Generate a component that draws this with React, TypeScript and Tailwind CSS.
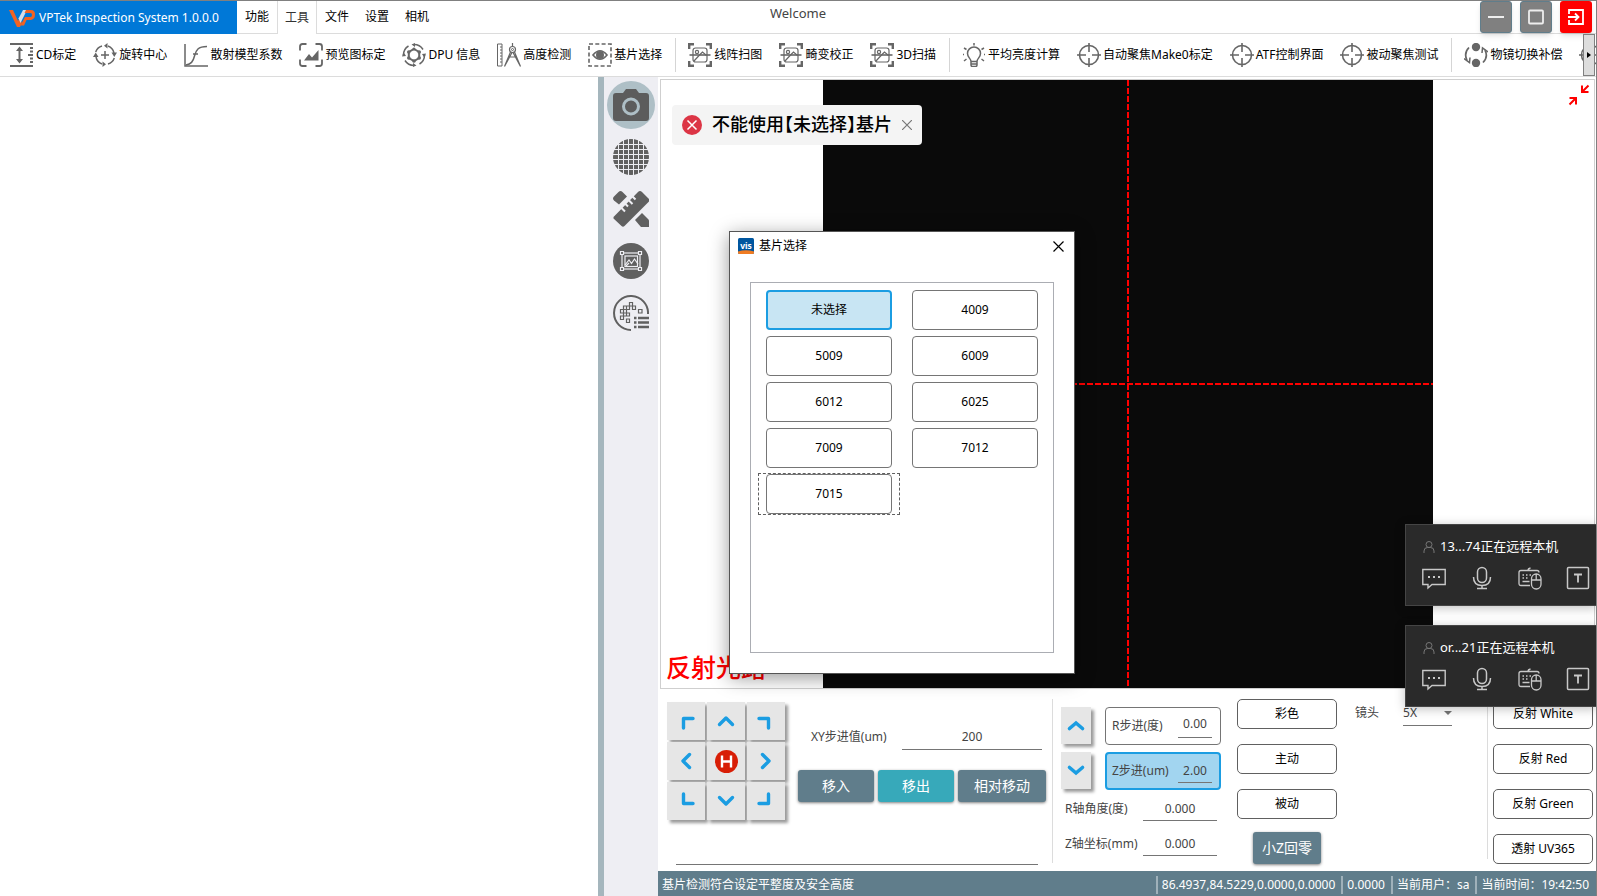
import { useState, type ReactNode } from 'react';
import clsx from 'clsx';

type IconProps = { children: ReactNode; className?: string };

function Icon({ children, className }: IconProps) {
    return (
        <svg
            viewBox="0 0 24 24"
            className={clsx('size-6 shrink-0', className)}
            fill="none"
            stroke="#666666"
            strokeWidth="1.5"
            aria-hidden="true"
        >
            {children}
        </svg>
    );
}

const CalibrateIcon = () => (
    <Icon>
        <path d="M0 1h23M0 23h23" strokeWidth="2" />
        <path d="M9.500 5v14" strokeWidth="2" />
        <path d="M6 8l3.500-4.500L13 8zM6 16l3.500 4.500L13 16z" fill="#666666" stroke="none" />
        <path d="M20 5h3M20 8.500h3M18 12h5M20 15.500h3M20 19h3" strokeWidth="2" />
    </Icon>
);

const RotateIcon = () => (
    <Icon>
        <path d="M15 3a9.500 9.500 0 0 1 6 7M21.300 15A9.500 9.500 0 0 1 15 21M9 21a9.500 9.500 0 0 1-6-7M2.700 9A9.500 9.500 0 0 1 9 3" />
        <path d="M12 8v8M8 12h8" strokeWidth="1.500" />
        <path d="M14.500 0v5.500L11 2.700zM24 9.500l-2.700 4.500-2.800-4.500zM9.500 24v-5.500l3.500 2.800zM0 14l2.700-4.500L5.500 14z" fill="#666666" stroke="none" />
    </Icon>
);

const CurveIcon = () => (
    <Icon>
        <path d="M1 1v22h23" />
        <path d="M2 22c5-1 7-3 8.500-9S14 3.500 23 3.500M9 11h5" />
    </Icon>
);

const PreviewIcon = () => (
    <Icon>
        <path d="M7.500 1H3.500Q1 1 1 3.500V7.500M16.500 1h4Q23 1 23 3.500V7.500M7.500 23H3.500Q1 23 1 20.500V16.500M16.500 23h4q2.500 0 2.500-2.500V16.500" strokeWidth="1.800" />
        <path d="M5 17.500l5-6.500 3 3.500 6.500-7.500v10.500z" fill="#666666" stroke="none" />
    </Icon>
);

const DpuIcon = () => (
    <Icon>
        <path d="M12 1.500a10.500 10.500 0 0 1 9 5M22.500 12a10.500 10.500 0 0 1-5 9M12 22.500a10.500 10.500 0 0 1-9-5M1.500 12a10.500 10.500 0 0 1 5-9" />
        <path d="M12 6l5.200 3v6L12 18l-5.200-3V9z" strokeWidth="2" />
        <g fill="#666666" stroke="none">
            <circle cx="6.800" cy="9" r="1.800" />
            <circle cx="17.200" cy="9" r="1.800" />
            <circle cx="6.800" cy="15" r="1.800" />
            <circle cx="17.200" cy="15" r="1.800" />
            <circle cx="12" cy="6" r="1.500" />
            <circle cx="12" cy="18" r="1.800" />
            <path d="M13 0v4L9.500 1.500zM24 10.500l-1.500 4.500-2.500-4zM11 24v-4l3.500 2.500zM0 13.500L1.500 9 4 13z" />
        </g>
    </Icon>
);

const CompassIcon = () => (
    <Icon className="overflow-visible">
        <path d="M.5 1h4.500v22H.5zM3 4h2M3 7h2M3 10h2M3 13h2M3 16h2M3 19h2" strokeWidth="1" />
        <path d="M15.500 0v3.500M13.500 9L7.500 23.500 15 9.500M17.500 9l6 14.500L16 9.500M11.500 14h8" strokeWidth="1.200" />
        <circle cx="15.500" cy="6.500" r="3" strokeWidth="1.200" />
        <circle cx="15.500" cy="6.500" r="1" strokeWidth="1" />
    </Icon>
);

const SubstrateIcon = () => (
    <Icon>
        <rect x="1" y="1" width="22" height="22" strokeWidth="1.600" strokeDasharray="4 2.300" />
        <path d="M5 12q7-8.500 14 0q-7 8.500-14 0z" strokeWidth="1.700" />
        <circle cx="12" cy="12" r="4" fill="#666666" stroke="none" />
    </Icon>
);

const ScanIcon = () => (
    <Icon>
        <path d="M6 1.200H1.200V6M18 1.200h4.800V6M6 22.800H1.200V18M18 22.800h4.800V18" strokeWidth="2.400" />
        <path d="M1.500 12h21" strokeWidth="1.600" />
        <rect x="5" y="5" width="14" height="14" rx="2.500" strokeWidth="1.200" />
        <circle cx="9" cy="9" r="1.600" strokeWidth="1.200" />
        <path d="M6 18l6-6.500 2.500-2.500 4 3.500" strokeWidth="1.200" />
    </Icon>
);

const BulbIcon = () => (
    <Icon>
        <path d="M9 18.500c0-3-3.500-4-3.500-8a6.500 6.500 0 0 1 13 0c0 4-3.500 5-3.500 8zM9 18.500V22q0 1.500 1.500 1.500h3q1.500 0 1.500-1.500v-3.500M9 21h6" />
        <path d="M12 0v2.500M2 5l2.500 1.500M22 5l-2.500 1.500M2 18l2.500-2M22 18l-2.500-2M1 11.500h1M22 11.500h1" />
    </Icon>
);

const TargetIcon = () => (
    <Icon>
        <circle cx="12" cy="12" r="9.500" strokeWidth="1.600" />
        <path d="M12 0v9M12 15v9M0 12h9M15 12h9" strokeWidth="1.600" />
    </Icon>
);

const SwitchIcon = () => (
    <Icon>
        <circle cx="12" cy="4" r="4.200" fill="#666666" stroke="none" />
        <circle cx="12" cy="20" r="4.200" fill="#666666" stroke="none" />
        <path d="M5 4.500Q-.5 10 3 17.500M19 19.500Q24.500 14 21 7" strokeWidth="1.700" />
        <path d="M0 15.500l5.500 4 .5-5M24 9l-5.500-4-.5 5" strokeWidth="1.500" />
    </Icon>
);

const toolGroups = [
    [
        { label: 'CD标定', icon: <CalibrateIcon /> },
        { label: '旋转中心', icon: <RotateIcon /> },
        { label: '散射模型系数', icon: <CurveIcon /> },
        { label: '预览图标定', icon: <PreviewIcon /> },
        { label: 'DPU 信息', icon: <DpuIcon /> },
        { label: '高度检测', icon: <CompassIcon /> },
        { label: '基片选择', icon: <SubstrateIcon /> }
    ],
    [
        { label: '线阵扫图', icon: <ScanIcon /> },
        { label: '畸变校正', icon: <ScanIcon /> },
        { label: '3D扫描', icon: <ScanIcon /> }
    ],
    [
        { label: '平均亮度计算', icon: <BulbIcon /> },
        { label: '自动聚焦Make0标定', icon: <TargetIcon /> },
        { label: 'ATF控制界面', icon: <TargetIcon /> },
        { label: '被动聚焦测试', icon: <TargetIcon /> }
    ],
    [
        { label: '物镜切换补偿', icon: <SwitchIcon /> },
        { label: '', icon: <TargetIcon /> }
    ]
];

const menus = ['功能', '工具', '文件', '设置', '相机'];
const substrates = ['未选择', '4009', '5009', '6009', '6012', '6025', '7009', '7012', '7015'];

function Header() {
    return (
        <header className="relative flex h-[34px] shrink-0 border-t border-[#808080]">
            <div className="flex w-[237px] items-center gap-1 bg-[#0078d7] pl-[9px] text-xs text-white">
                <svg viewBox="0 0 26 18" className="h-[18px] w-[26px] shrink-0" aria-hidden="true">
                    <path d="M0 1h4l5 11 1.500-3 2.500 5-2 4H8z" fill="#f26322" />
                    <path d="M9.500 9.500L14 1h4l-6.500 13z" fill="#d5dde8" />
                    <path d="M17 1h5q4 0 4 4.500T22 11h-4.500L15 16.500h-3.500L16 8h5.500q1.500 0 1.500-2t-1.500-2h-6z" fill="#f26322" />
                </svg>
                <span className="whitespace-nowrap">VPTek Inspection System 1.0.0.0</span>
            </div>
            <nav className="flex flex-1 border-b border-[#dcdcdc]">
                {menus.map((menu) => (
                    <button
                        key={menu}
                        className={clsx(
                            'w-10 text-xs',
                            menu === '工具' && '-mb-px border-x border-[#dcdcdc] bg-white text-[#333333]'
                        )}
                    >
                        {menu}
                    </button>
                ))}
            </nav>
            <div className="pointer-events-none absolute inset-x-0 top-1 text-center text-[13px] leading-4 text-[#444444]">Welcome</div>
            <div className="absolute top-0 right-1 flex gap-2">
                <button aria-label="最小化" className="flex size-8 items-center justify-center rounded-[3px] border border-[#607d8b] bg-[#808080] shadow-md">
                    <svg viewBox="0 0 16 16" className="size-4"><path d="M0 8h16" stroke="#eeeeee" strokeWidth="2" /></svg>
                </button>
                <button aria-label="最大化" className="flex size-8 items-center justify-center rounded-[3px] border border-[#607d8b] bg-[#808080] shadow-md">
                    <svg viewBox="0 0 16 16" className="size-4"><rect x="1" y="1.500" width="14" height="13" rx="1" fill="none" stroke="#eeeeee" strokeWidth="1.800" /></svg>
                </button>
                <button aria-label="退出" className="flex size-8 items-center justify-center rounded-[3px] bg-[#ff0000] shadow-md">
                    <svg viewBox="0 0 16 16" className="size-4" fill="none" stroke="#ffffff" strokeWidth="1.800">
                        <path d="M1 5V1h14v14H1v-4M0 8h10M7 4.500L10.500 8 7 11.500" />
                    </svg>
                </button>
            </div>
        </header>
    );
}

function Toolbar() {
    return (
        <div className="relative h-[43px] shrink-0 overflow-hidden border-b border-[#dcdcdc]">
            <div className="flex h-[41px] items-center pl-0.5 text-xs">
                {toolGroups.map((group, i) => (
                    <div key={i} className="flex shrink-0 items-center">
                        {i > 0 && <div className="mx-1 h-[34px] w-px bg-[#d5d5d5]" />}
                        {group.map((tool) => (
                            <button key={tool.label} className="flex shrink-0 items-center gap-0.5 pr-[9px] pl-2 whitespace-nowrap" aria-label={tool.label || '更多'}>
                                {tool.icon}
                                {tool.label}
                            </button>
                        ))}
                    </div>
                ))}
            </div>
            <button aria-label="向右滚动" className="absolute inset-y-0 right-px flex w-3 items-center justify-center border border-[#808080] bg-[#dddddd]">
                <svg viewBox="0 0 4 6" className="h-1.5 w-1"><path d="M0 0l4 3-4 3z" /></svg>
            </button>
        </div>
    );
}

function SideBar() {
    return (
        <aside className="flex w-[54px] shrink-0 flex-col items-center gap-1 bg-[#eeeef3] pt-1 text-[#606060]">
            <button aria-label="相机" className="flex size-12 items-center justify-center rounded-full bg-[#aebfc6]">
                <svg viewBox="0 0 36 36" className="size-9">
                    <path d="M3 6h7l3-4h10l3 4h7q3 0 3 3v22q0 3-3 3H3q-3 0-3-3V9q0-3 3-3z" fill="#5c5c5c" />
                    <circle cx="18" cy="19.500" r="7.500" fill="none" stroke="#aebfc6" strokeWidth="3" />
                </svg>
            </button>
            <button aria-label="网格" className="flex size-12 items-center justify-center">
                <svg viewBox="0 0 36 36" className="size-9">
                    <circle cx="18" cy="18" r="18" fill="currentColor" />
                    <path d="M5.500 0v36M10.500 0v36M15.500 0v36M20.500 0v36M25.500 0v36M30.500 0v36M0 5.500h36M0 10.500h36M0 15.500h36M0 20.500h36M0 25.500h36M0 30.500h36" stroke="#eeeef3" strokeWidth="1" />
                </svg>
            </button>
            <button aria-label="测量" className="flex size-12 items-center justify-center">
                <svg viewBox="0 0 36 36" className="size-9" fill="currentColor">
                    <path d="M5.500 1q2-2 4 0l4.500 4.500-8 8L1 9.500q-2-2 0-4z" />
                    <path d="M29 22l6.500 6.500q.5.500.5 1.500v6h-7q-1 0-1.500-.5L22 29z" />
                    <path d="M.5 26L25 1q2-2 4 0l6.500 6.500q1.500 1.500 0 3.500L11.500 35q-1.500 1.500-3 0L.5 27.500z" />
                    <path d="M8 16.500l4 4M12 12.500l3 3M15.500 9l4 4M19.500 5.500l3 3" stroke="#eeeef3" strokeWidth="2" />
                </svg>
            </button>
            <button aria-label="图像" className="flex size-12 items-center justify-center">
                <svg viewBox="0 0 36 36" className="size-9" fill="none" stroke="#eeeef3" strokeWidth="1.200">
                    <circle cx="18" cy="18" r="18" fill="#606060" stroke="none" />
                    <rect x="9" y="10" width="18" height="16" />
                    <rect x="12" y="13" width="12.500" height="10.500" />
                    <path d="M12 22l4-5 2.500 3.500 3-4.500 3.500 5M13 23l3-3" />
                    <path d="M7.500 8.500h3v3h-3zM25.500 8.500h3v3h-3zM7.500 24.500h3v3h-3zM25.500 24.500h3v3h-3z" fill="#606060" />
                </svg>
            </button>
            <button aria-label="晶圆列表" className="flex size-12 items-center justify-center">
                <svg viewBox="0 0 36 36" className="size-9" fill="none" stroke="currentColor">
                    <path d="M18 35A17 17 0 1 1 35 19" strokeWidth="2" />
                    <path d="M16.500 7.500h3v3.500h-3zM19.500 11h3v3.500h-3zM13.500 11h3v3.500h-3zM10.500 11h3v3.500h-3zM7.500 14.500h3V18h-3zM10.500 14.500h3V18h-3zM7.500 21h3v3.500h-3zM10.500 18h3v3h-3zM13.500 18h3v3h-3zM13.500 24h3v3.500h-3zM25.500 14.500h3.500V18h-3.500z" strokeWidth="1.200" />
                    <path d="M21 23h2.500M21 27.500h2.500M21 32h2.500M25 23h11M25 27.500h11M25 32h11" strokeWidth="2.400" />
                </svg>
            </button>
        </aside>
    );
}

function CameraView() {
    return (
        <section className="relative mt-0.5 mr-px ml-0.5 flex min-h-0 flex-1 justify-center border border-[#cfcfcf]">
            <div className="relative aspect-[610/608] h-full bg-[#0a0a0a]">
                <svg className="absolute inset-0 size-full" stroke="#ff0000" strokeWidth="2" strokeDasharray="6 2" aria-hidden="true">
                    <line x1="50%" y1="0" x2="50%" y2="100%" />
                    <line x1="0" y1="50%" x2="100%" y2="50%" />
                </svg>
            </div>
            <button aria-label="还原" className="absolute top-1 right-1">
                <svg viewBox="0 0 22 22" className="size-[22px]" fill="none" stroke="#ff0000" strokeWidth="2">
                    <path d="M20.500 1.500L14.500 7.500M14 1.500V8h6.500M1.500 20.500l6-6M1.500 14H8v6.500" />
                </svg>
            </button>
            <p className="absolute bottom-[5px] left-[5px] text-[25px] leading-8 font-medium text-[#ff0000]">反射光路</p>
            <div role="alert" className="absolute top-[25px] left-[11px] flex h-10 w-[250px] items-center rounded-sm bg-[#f4f4f4] pl-2.5">
                <svg viewBox="0 0 20 20" className="size-5 shrink-0">
                    <circle cx="10" cy="10" r="10" fill="#dc3545" />
                    <path d="M5.500 5.500l9 9M14.500 5.500l-9 9" stroke="#ffffff" strokeWidth="1.500" />
                </svg>
                <span className="ml-2.5 pb-0.5 text-lg font-medium whitespace-nowrap [font-feature-settings:'halt']">不能使用【未选择】基片</span>
                <button aria-label="关闭" className="ml-2.5">
                    <svg viewBox="0 0 10 10" className="size-2.5"><path d="M0 0l10 10M10 0L0 10" stroke="#777777" strokeWidth="1.200" /></svg>
                </button>
            </div>
        </section>
    );
}

const padKeys = [
    { name: '左上', d: 'M26 16.500H16.500V26' },
    { name: '上', d: 'M12.500 22.500L19 16l6.500 6.500' },
    { name: '右上', d: 'M12 16.500h9.500V26' },
    { name: '左', d: 'M22.500 12.500L16 19l6.500 6.500' },
    { name: '复位', d: '' },
    { name: '右', d: 'M15.500 12.500L22 19l-6.500 6.500' },
    { name: '左下', d: 'M26 21.500H16.500V12' },
    { name: '下', d: 'M12.500 15.500L19 22l6.500-6.500' },
    { name: '右下', d: 'M12 21.500h9.500V12' }
];

const keyClass = 'bg-[#e6e6e6] shadow-[3px_3px_3px_rgba(0,0,0,0.4)]';
const outlineClass = 'h-[30px] w-[100px] rounded-[5px] border border-[#606060] bg-white text-xs text-black';
const solidClass = 'h-8 rounded-[3px] text-sm text-white shadow-[0_1px_3px_rgba(0,0,0,0.5)]';
const fieldClass = 'border-b border-[#757575] bg-transparent text-center text-[#444444] outline-none';

function Controls() {
    return (
        <section className="flex shrink-0 pt-2.5 pr-[3px] pb-1.5 text-xs text-[#444444]">
            <div className="flex h-[166px] w-[394px] flex-col justify-between pl-[9px]">
                <div className="flex gap-[13px]">
                    <div className="mt-[3px] grid grid-cols-3 gap-0.5">
                        {padKeys.map((key) => (
                            <button key={key.name} aria-label={key.name} className={clsx('size-[38px]', keyClass)}>
                                <svg viewBox="0 0 38 38" className="size-[38px]" fill="none">
                                    {key.d ? (
                                        <path d={key.d} stroke="#1b9de2" strokeWidth="3.400" strokeLinecap="round" strokeLinejoin="round" />
                                    ) : (
                                        <>
                                            <circle cx="19.500" cy="19.500" r="11.500" fill="#d81e06" />
                                            <path d="M15 13.500v12M24 13.500v12M15 19.500h9" stroke="#ffffff" strokeWidth="2.400" />
                                        </>
                                    )}
                                </svg>
                            </button>
                        ))}
                    </div>
                    <div className="pt-[25px]">
                        <div className="flex h-[26px] items-center pl-[13px]">
                            <label htmlFor="xy-step" className="w-[91px]">XY步进值(um)</label>
                            <input id="xy-step" defaultValue="200" className={clsx('h-[26px] w-[140px]', fieldClass)} />
                        </div>
                        <div className="mt-5 flex gap-1">
                            <button className={clsx('w-[76px] bg-[#607d8b]', solidClass)}>移入</button>
                            <button className={clsx('w-[76px] bg-[#37a9ba]', solidClass)}>移出</button>
                            <button className={clsx('w-[88px] bg-[#607d8b]', solidClass)}>相对移动</button>
                        </div>
                    </div>
                </div>
                <input aria-label="消息" className={clsx('ml-[9px] h-6 w-[362px]', fieldClass)} />
            </div>

            <div className="h-[164px] w-px bg-[#dcdcdc]" />

            <div className="flex flex-1 pl-2">
                <div className="w-40 pt-2">
                    <div className="flex flex-col gap-[7px]">
                        <div className="flex h-[38px] gap-3.5">
                            <button aria-label="增加" className={clsx('h-[37px] w-[30px]', keyClass)}>
                                <svg viewBox="0 0 30 37" className="h-[37px] w-[30px]" fill="none" stroke="#1b9de2" strokeWidth="3.600" strokeLinecap="round">
                                    <path d="M8.500 21.500L15 16l6.500 5.500" />
                                </svg>
                            </button>
                            <div className="flex w-[116px] items-center justify-between rounded-[4px] border border-[#757575] pr-2 pl-1.5">
                                <label htmlFor="r-step">R步进(度)</label>
                                <input id="r-step" defaultValue="0.00" className={clsx('h-6 w-[34px] pb-1', fieldClass)} />
                            </div>
                        </div>
                        <div className="flex h-[38px] gap-3.5">
                            <button aria-label="减少" className={clsx('h-[37px] w-[30px]', keyClass)}>
                                <svg viewBox="0 0 30 37" className="h-[37px] w-[30px]" fill="none" stroke="#1b9de2" strokeWidth="3.600" strokeLinecap="round">
                                    <path d="M8.500 15.500L15 21l6.500-5.500" />
                                </svg>
                            </button>
                            <div className="flex w-[116px] items-center justify-between rounded-[4px] border-2 border-[#1b9de2] bg-[#a2d5f0] pr-[7px] pl-[5px]">
                                <label htmlFor="z-step">Z步进(um)</label>
                                <input id="z-step" defaultValue="2.00" className={clsx('h-6 w-[34px]', fieldClass)} />
                            </div>
                        </div>
                    </div>
                    <div className="mt-[7px] flex h-6 items-center pl-1">
                        <label htmlFor="r-angle" className="w-[78px]">R轴角度(度)</label>
                        <input id="r-angle" defaultValue="0.000" className={clsx('h-6 w-[74px]', fieldClass)} />
                    </div>
                    <div className="mt-[11px] flex h-6 items-center pl-1">
                        <label htmlFor="z-pos" className="w-[78px] whitespace-nowrap">Z轴坐标(mm)</label>
                        <input id="z-pos" defaultValue="0.000" className={clsx('h-6 w-[74px]', fieldClass)} />
                    </div>
                </div>

                <div className="ml-4 flex flex-col items-center gap-[13px]">
                    <div className="flex flex-col gap-[15px]">
                        <button className={outlineClass}>彩色</button>
                        <button className={outlineClass}>主动</button>
                        <button className={outlineClass}>被动</button>
                    </div>
                    <button className={clsx('w-[68px] bg-[#607d8b]', solidClass)}>小Z回零</button>
                </div>

                <div className="ml-[18px] flex h-7 items-center gap-6">
                    <label htmlFor="lens">镜头</label>
                    <div className="relative">
                        <select id="lens" defaultValue="5X" className="h-[26px] w-[49px] appearance-none border-b border-[#757575] bg-transparent text-[#444444] outline-none">
                            <option>5X</option>
                            <option>10X</option>
                            <option>20X</option>
                        </select>
                        <svg viewBox="0 0 8 4" className="pointer-events-none absolute top-[11px] right-0 h-1 w-2"><path d="M0 0h8L4 4z" fill="#757575" /></svg>
                    </div>
                </div>
            </div>

            <div className="mr-[5px] h-[160px] w-px bg-[#dcdcdc]" />

            <div className="flex flex-col gap-[15px]">
                <button className={outlineClass}>反射 White</button>
                <button className={outlineClass}>反射 Red</button>
                <button className={outlineClass}>反射 Green</button>
                <button className={outlineClass}>透射 UV365</button>
            </div>
        </section>
    );
}

function StatusBar() {
    const cellClass = 'border-l-2 border-[#9fb1ba] pl-1';
    return (
        <footer className="flex h-[25px] shrink-0 bg-[#607d8b] pt-[5px] pr-[7px] pb-0.5 pl-1 text-xs leading-[18px] whitespace-nowrap text-white">
            <span className="flex-1">基片检测符合设定平整度及安全高度</span>
            <span className={clsx('pr-1.5', cellClass)}>86.4937,84.5229,0.0000,0.0000</span>
            <span className={clsx('pr-1.5', cellClass)}>0.0000</span>
            <span className={clsx('pr-1.5', cellClass)}>当前用户：sa</span>
            <span className={cellClass}>当前时间：19:42:50</span>
        </footer>
    );
}

function SubstrateDialog() {
    const [selected, setSelected] = useState('未选择');
    return (
        <div role="dialog" aria-label="基片选择" className="absolute top-[231px] left-[729px] w-[346px] border border-[#555555] bg-white px-5 pb-5 shadow-[0_4px_18px_rgba(0,0,0,0.4)]">
            <div className="-mx-3 flex h-7 items-center">
                <svg viewBox="0 0 16 16" className="size-4" aria-hidden="true">
                    <rect width="16" height="16" rx="1.500" fill="#00569f" />
                    <path d="M0 13.500q8-2.500 16 0v1q0 1.500-1.500 1.500h-13Q0 16 0 14.500z" fill="#f07c22" />
                    <text x="8" y="10.500" textAnchor="middle" fontSize="8.500" fontWeight="700" fill="#ffffff">vis</text>
                </svg>
                <span className="ml-[5px] text-xs">基片选择</span>
                <button aria-label="关闭" className="mr-0.5 ml-auto">
                    <svg viewBox="0 0 11 11" className="size-[11px]"><path d="M.5.500l10 10M10.500.500l-10 10" stroke="#000000" strokeWidth="1.200" /></svg>
                </button>
            </div>
            <div className="mt-[22px] h-[371px] border border-[#abadb3] px-[7px] pt-1.5">
                <div className="grid grid-cols-[142px_142px] gap-x-1 gap-y-1">
                    {substrates.map((name) => (
                        <div
                            key={name}
                            className={clsx(
                                'flex h-[42px] items-center justify-center border border-dashed',
                                name === '7015' ? 'border-[#606060]' : 'border-transparent'
                            )}
                        >
                            <button
                                onClick={() => setSelected(name)}
                                className={clsx(
                                    'h-10 w-[126px] shrink-0 rounded-[4px] text-xs',
                                    name === selected ? 'border-2 border-[#1b9de2] bg-[#c8e5f3]' : 'border border-[#757575] bg-white'
                                )}
                            >
                                {name}
                            </button>
                        </div>
                    ))}
                </div>
            </div>
        </div>
    );
}

function RemoteCard({ name }: { name: string }) {
    return (
        <div className="h-[82px] w-48 border border-r-0 border-[#454545] bg-[#2a2a2a] pt-3 pl-4 shadow-[0_2px_10px_rgba(0,0,0,0.25)]">
            <div className="flex h-5 items-center gap-[5px] text-[13px] whitespace-nowrap text-white">
                <svg viewBox="0 0 12 12" className="ml-px size-3" fill="none" stroke="#777777">
                    <circle cx="6" cy="3.500" r="3" />
                    <path d="M1 12V10q0-3.500 3.500-3.500h3Q11 6.500 11 10v2" />
                </svg>
                {name}正在远程本机
            </div>
            <div className="mt-[9px] flex gap-6">
                <button aria-label="消息">
                    <svg viewBox="0 0 24 24" className="size-6" fill="none" stroke="#c8c8c8" strokeWidth="1.400">
                        <path d="M.8 3.500h22.400v15H10L6 22v-3.500H.8z" />
                        <path d="M6 11h2M11 11h2M16 11h2" strokeWidth="2" />
                    </svg>
                </button>
                <button aria-label="语音">
                    <svg viewBox="0 0 24 24" className="size-6" fill="none" stroke="#c8c8c8" strokeWidth="1.500">
                        <rect x="7.500" y="1.500" width="9" height="15" rx="4.500" />
                        <path d="M3.500 11q0 8.500 8.500 8.500t8.500-8.500M12 19.500V22.500M7 22.500h10" />
                    </svg>
                </button>
                <button aria-label="键鼠">
                    <svg viewBox="0 0 24 24" className="size-6" fill="none" stroke="#c8c8c8" strokeWidth="1.300">
                        <path d="M12 19.500H3q-2 0-2-2v-11q0-2 2-2h16q2 0 2 2M10 4.500q0-2 2.500-2.500" />
                        <path d="M4.500 9H6M8 9h1.500M11.500 9H13M4.500 12H6M8 12h1.500M4.500 15.500h7" strokeWidth="1.600" />
                        <rect x="13.500" y="8" width="9.500" height="15" rx="4.700" />
                        <path d="M13.500 14H23M18.200 8v6" />
                    </svg>
                </button>
                <button aria-label="文本">
                    <svg viewBox="0 0 24 24" className="size-6" fill="none" stroke="#c8c8c8" strokeWidth="1.500">
                        <rect x="1.500" y="1.500" width="21" height="21" rx="1" />
                        <path d="M8 8.500h8M12 8.500v8" strokeWidth="1.800" />
                    </svg>
                </button>
            </div>
        </div>
    );
}

export default function App() {
    return (
        <div className="relative flex h-screen flex-col overflow-hidden border-r border-[#808080] bg-white font-['Noto_Sans','Noto_Sans_CJK_SC',sans-serif] text-black">
            <Header />
            <Toolbar />
            <main className="flex min-h-0 flex-1">
                <div className="w-[598px] shrink-0" />
                <div className="w-1.5 shrink-0 bg-[#a5b6bd]" />
                <SideBar />
                <div className="flex min-w-0 flex-1 flex-col">
                    <CameraView />
                    <Controls />
                    <StatusBar />
                </div>
            </main>
            <SubstrateDialog />
            <div className="absolute top-[524px] right-[-1px] flex flex-col gap-[19px]">
                <RemoteCard name="13...74" />
                <RemoteCard name="or...21" />
            </div>
        </div>
    );
}
